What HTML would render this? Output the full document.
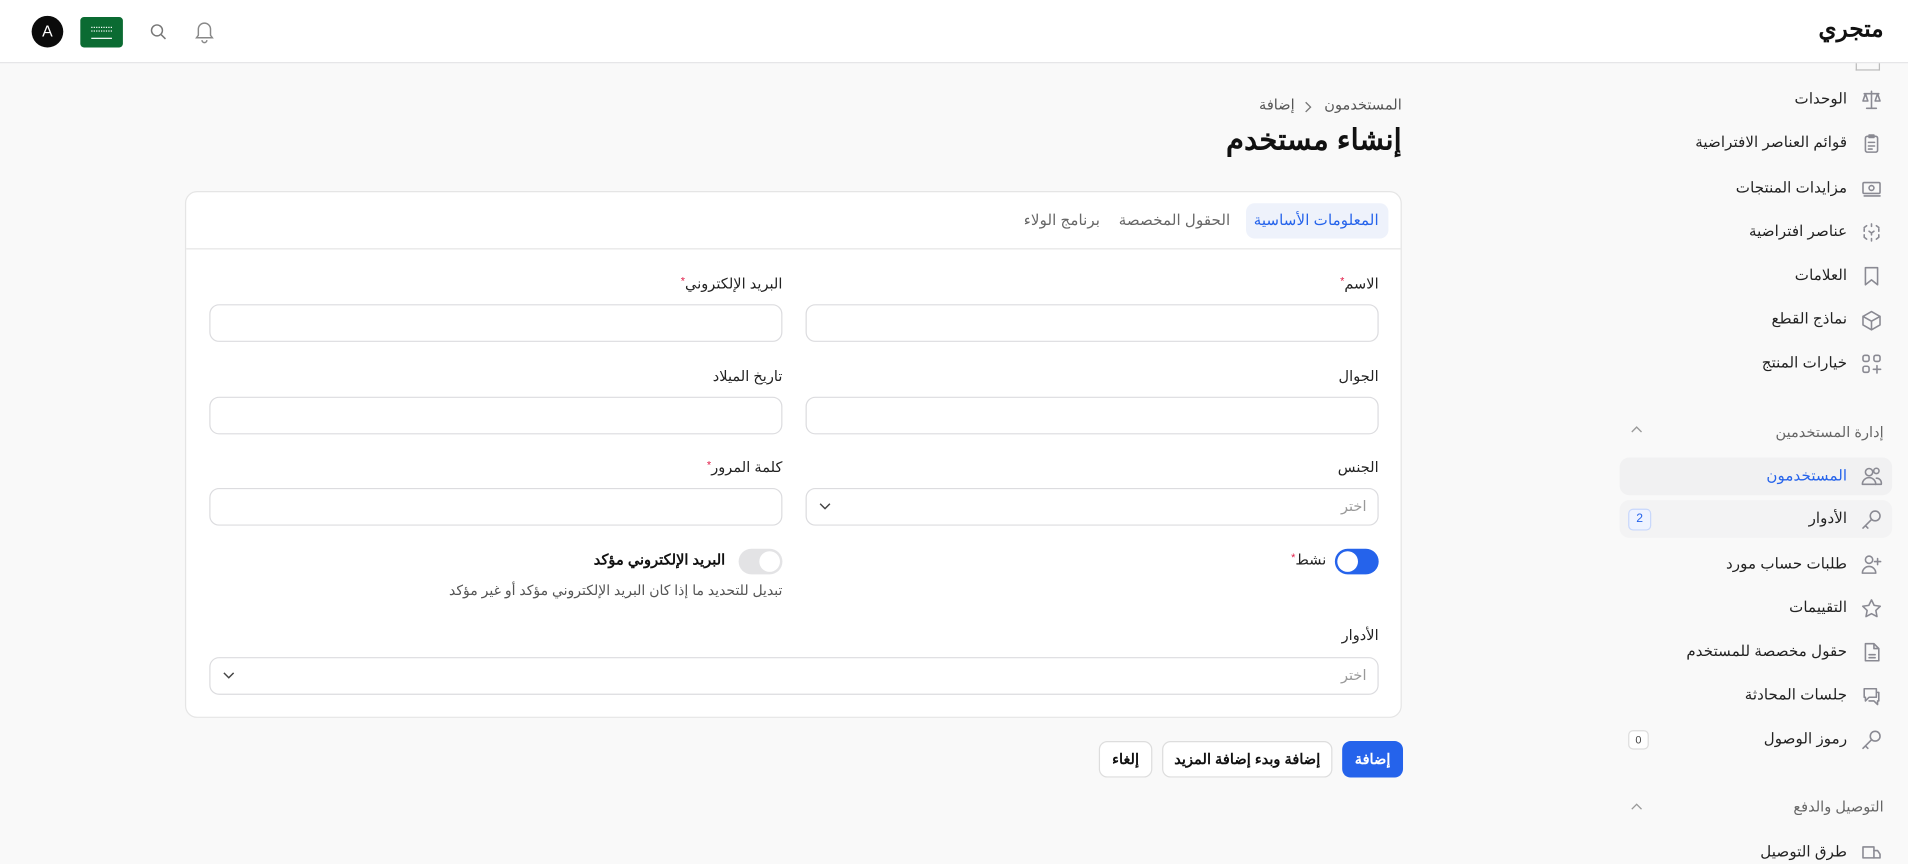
<!DOCTYPE html>
<html lang="ar" dir="rtl"><head><meta charset="utf-8">
<style>
*{box-sizing:border-box;margin:0;padding:0}
html,body{width:1908px;height:860px;overflow:hidden;background:#f9f9f9}
body{font-family:"Liberation Sans","Noto Sans CJK SC",sans-serif;color:#111}
#w{position:absolute;left:0;top:0;width:1568px;height:707px;transform:scale(1.21684);transform-origin:0 0;background:#f9f9f9;direction:ltr}
.a{position:absolute}
.t{position:absolute;direction:rtl;white-space:nowrap}
.hdr{left:0;top:0;width:1568px;height:52px;background:#fff;border-bottom:1px solid #e4e4e7}
.card{left:152px;top:157px;width:1000px;height:433px;background:#fff;border:1px solid #e5e5e5;border-radius:10px}
.inp{position:absolute;height:31px;background:#fff;border:1px solid #dcdcdf;border-radius:8px}
.lbl{font-size:12px;color:#222}
.req{color:#e11d48;font-size:9px;vertical-align:top}
.si{font-size:12.5px;color:#222}
.ic{position:absolute;width:18px;height:18px}
.ic *{fill:none;stroke:#8a8a93;stroke-width:1.3;stroke-linecap:round;stroke-linejoin:round}
.btn{position:absolute;top:609px;height:30px;border-radius:7px;font-size:12px;font-weight:bold;display:flex;align-items:center;justify-content:center;direction:rtl}
</style></head><body><div id="w">
<div class="a hdr"></div>
<div class="t" style="right:20px;top:13px;font-size:19px;font-weight:bold">متجري</div>
<div class="a" style="left:26px;top:13px;width:26px;height:26px;border-radius:50%;background:#0b0b0b;color:#fff;font-size:13px;text-align:center;line-height:26px">A</div>
<div class="a" style="left:66px;top:14px;width:35px;height:25px;border-radius:3px;background:#0b6b32"><div class="a" style="left:9px;top:8px;width:17px;height:4px;border-top:1px dotted #fff;border-bottom:1px dotted #fff"></div><div class="a" style="left:9px;top:17px;width:17px;height:1px;background:#fff"></div></div>
<svg class="a" style="left:123px;top:19px" width="14" height="14" viewBox="0 0 14 14"><circle cx="6" cy="6" r="4.5" fill="none" stroke="#777" stroke-width="1.2"/><path d="M9.5 9.5L13 13" stroke="#777" stroke-width="1.2"/></svg>
<svg class="a" style="left:159px;top:16px" width="18" height="20" viewBox="0 0 18 20"><path d="M4 13V8a5 5 0 0 1 10 0v5l1.5 2h-13z M7 17a2 2 0 0 0 4 0" fill="none" stroke="#888" stroke-width="1.2"/></svg>

<!-- sidebar -->
<div class="a" style="left:1525px;top:52px;width:20px;height:6px;border:1px solid #bbb;border-top:none"></div>
<div class="t si" style="right:50px;top:73px">الوحدات</div>
<svg class="ic" style="left:1529px;top:73px" viewBox="0 0 18 18"><path d="M9 2v14M5 16h8M3 4h12M4 4l-2 6h4zM14 4l-2 6h4z"/></svg>
<div class="t si" style="right:50px;top:109px">قوائم العناصر الافتراضية</div>
<svg class="ic" style="left:1529px;top:109px" viewBox="0 0 18 18"><rect x="4" y="3" width="10" height="13" rx="1.5"/><path d="M7 2h4v2H7zM6.5 8h5M6.5 11h5M6.5 13.5h3"/></svg>
<div class="t si" style="right:50px;top:146px">مزايدات المنتجات</div>
<svg class="ic" style="left:1529px;top:146px" viewBox="0 0 18 18"><rect x="2" y="4" width="14" height="9" rx="1"/><circle cx="9" cy="8.5" r="2"/><path d="M3 15h13"/></svg>
<div class="t si" style="right:50px;top:182px">عناصر افتراضية</div>
<svg class="ic" style="left:1529px;top:182px" viewBox="0 0 18 18"><path d="M9 2v2M9 14v2M3 6v2M15 6v2M3 11v2M15 11v2M5 3.5l-2 1.5M13 3.5l2 1.5M5 14.5l-2-1.5M13 14.5l2-1.5M7 8l2 1.5 2-1.5M9 9.5V11"/></svg>
<div class="t si" style="right:50px;top:218px">العلامات</div>
<svg class="ic" style="left:1529px;top:218px" viewBox="0 0 18 18"><path d="M4 2h10v14l-5-4-5 4z"/></svg>
<div class="t si" style="right:50px;top:254px">نماذج القطع</div>
<svg class="ic" style="left:1529px;top:254px" viewBox="0 0 18 18"><path d="M9 2l7 4v7l-7 4-7-4V6zM2 6l7 4 7-4M9 10v7"/></svg>
<div class="t si" style="right:50px;top:290px">خيارات المنتج</div>
<svg class="ic" style="left:1529px;top:290px" viewBox="0 0 18 18"><rect x="2" y="2" width="5" height="5" rx="1.5"/><rect x="11" y="2" width="5" height="5" rx="1.5"/><rect x="2" y="11" width="5" height="5" rx="1.5"/><path d="M13.5 10.5v6M10.5 13.5h6"/></svg>

<div class="t" style="right:20px;top:348px;font-size:12px;color:#666">إدارة المستخدمين</div>
<svg class="a" style="left:1340px;top:349px" width="10" height="8" viewBox="0 0 10 8"><path d="M1 6l4-4 4 4" fill="none" stroke="#999" stroke-width="1.1"/></svg>
<div class="a" style="left:1331px;top:376px;width:224px;height:31px;background:#f1f1f2;border-radius:8px"></div>
<div class="t si" style="right:50px;top:383px;color:#2563eb">المستخدمون</div>
<svg class="ic" style="left:1529px;top:382px" viewBox="0 0 18 18"><g style="stroke:#2563eb"><circle cx="7" cy="6" r="3"/><path d="M1.5 16a5.5 5.5 0 0 1 11 0z"/><circle cx="13" cy="5" r="2.2"/><path d="M12 16h5a4 4 0 0 0-4-5"/></g></svg>
<div class="a" style="left:1331px;top:411px;width:224px;height:31px;background:#f3f3f4;border-radius:8px"></div>
<div class="t si" style="right:50px;top:418px">الأدوار</div>
<svg class="ic" style="left:1529px;top:418px" viewBox="0 0 18 18"><circle cx="12" cy="6" r="4"/><path d="M9 9L2 16M4 14l2 2"/></svg>
<div class="a" style="left:1338px;top:418px;width:19px;height:18px;border:1px solid #c8d7fb;background:#eef3ff;border-radius:4px;font-size:10px;color:#2563eb;text-align:center;line-height:16px">2</div>
<div class="t si" style="right:50px;top:455px">طلبات حساب مورد</div>
<svg class="ic" style="left:1529px;top:455px" viewBox="0 0 18 18"><circle cx="7" cy="5" r="3"/><path d="M1.5 16a5.5 5.5 0 0 1 11 0zM14 4v5M11.5 6.5h5"/></svg>
<div class="t si" style="right:50px;top:491px">التقييمات</div>
<svg class="ic" style="left:1529px;top:491px" viewBox="0 0 18 18"><path d="M9 2l2.2 4.5 5 .7-3.6 3.5.9 5L9 13.3 4.5 15.7l.9-5L1.8 7.2l5-.7z"/></svg>
<div class="t si" style="right:50px;top:527px">حقول مخصصة للمستخدم</div>
<svg class="ic" style="left:1529px;top:527px" viewBox="0 0 18 18"><path d="M4 2h7l4 4v10H4zM11 2v4h4M7 11h5M7 13.5h5"/></svg>
<div class="t si" style="right:50px;top:563px">جلسات المحادثة</div>
<svg class="ic" style="left:1529px;top:563px" viewBox="0 0 18 18"><path d="M3 3h10v7H7l-3 3v-3H3zM13 6h2v7h-1v3l-3-3H7"/></svg>
<div class="t si" style="right:50px;top:599px">رموز الوصول</div>
<svg class="ic" style="left:1529px;top:599px" viewBox="0 0 18 18"><circle cx="12" cy="6" r="4"/><path d="M9 9L2 16M4 14l2 2"/></svg>
<div class="a" style="left:1338px;top:600px;width:17px;height:16px;border:1px solid #ddd;background:#fff;border-radius:4px;font-size:9px;color:#444;text-align:center;line-height:14px">0</div>
<div class="t" style="right:20px;top:656px;font-size:12px;color:#666">التوصيل والدفع</div>
<svg class="a" style="left:1340px;top:659px" width="10" height="8" viewBox="0 0 10 8"><path d="M1 6l4-4 4 4" fill="none" stroke="#999" stroke-width="1.1"/></svg>
<div class="t si" style="right:50px;top:692px">طرق التوصيل</div>
<svg class="ic" style="left:1529px;top:692px" viewBox="0 0 18 18"><rect x="2" y="4" width="9" height="9"/><path d="M11 7h3l2 3v3h-5"/></svg>

<!-- main -->
<div class="t" style="right:416px;top:79px;font-size:12px;color:#555">المستخدمون</div>
<svg class="a" style="left:1071px;top:83px" width="8" height="10" viewBox="0 0 8 10"><path d="M2 1l4 4-4 4" fill="none" stroke="#777" stroke-width="1.1"/></svg>
<div class="t" style="right:504px;top:79px;font-size:12px;color:#555">إضافة</div>
<div class="t" style="right:416px;top:101px;font-size:24px;font-weight:bold">إنشاء مستخدم</div>

<div class="a card"></div>
<div class="a" style="left:153px;top:204px;width:998px;height:1px;background:#e5e5e5"></div>
<div class="a" style="left:1024px;top:167px;width:117px;height:29px;background:#eef2fb;border-radius:7px"></div>
<div class="t" style="right:435px;top:173px;font-size:12.5px;color:#2563eb">المعلومات الأساسية</div>
<div class="t" style="right:557px;top:173px;font-size:12.5px;color:#666">الحقول المخصصة</div>
<div class="t" style="right:664px;top:173px;font-size:12.5px;color:#666">برنامج الولاء</div>

<div class="t lbl" style="right:435px;top:226px">الاسم<span class="req">*</span></div>
<div class="inp" style="left:662px;top:250px;width:471px"></div>
<div class="t lbl" style="right:925px;top:226px">البريد الإلكتروني<span class="req">*</span></div>
<div class="inp" style="left:172px;top:250px;width:471px"></div>
<div class="t lbl" style="right:435px;top:302px">الجوال</div>
<div class="inp" style="left:662px;top:326px;width:471px"></div>
<div class="t lbl" style="right:925px;top:302px">تاريخ الميلاد</div>
<div class="inp" style="left:172px;top:326px;width:471px"></div>
<div class="t lbl" style="right:435px;top:377px">الجنس</div>
<div class="inp" style="left:662px;top:401px;width:471px"></div>
<div class="t" style="right:445px;top:409px;font-size:12px;color:#999">اختر</div>
<svg class="a" style="left:673px;top:412px" width="10" height="8" viewBox="0 0 10 8"><path d="M1 2l4 4 4-4" fill="none" stroke="#444" stroke-width="1.2"/></svg>
<div class="t lbl" style="right:925px;top:377px">كلمة المرور<span class="req">*</span></div>
<div class="inp" style="left:172px;top:401px;width:471px"></div>

<div class="a" style="left:1097px;top:451px;width:36px;height:21px;border-radius:11px;background:#2563eb"><div class="a" style="left:2px;top:2px;width:17px;height:17px;border-radius:50%;background:#fff"></div></div>
<div class="t lbl" style="right:478px;top:453px">نشط<span class="req">*</span></div>
<div class="a" style="left:607px;top:451px;width:36px;height:21px;border-radius:11px;background:#e3e3e5"><div class="a" style="left:17px;top:2px;width:17px;height:17px;border-radius:50%;background:#fff"></div></div>
<div class="t" style="right:972px;top:453px;font-size:12px;font-weight:600">البريد الإلكتروني مؤكد</div>
<div class="t" style="right:925px;top:478px;font-size:11.5px;color:#555">تبديل للتحديد ما إذا كان البريد الإلكتروني مؤكد أو غير مؤكد</div>

<div class="t lbl" style="right:435px;top:515px">الأدوار</div>
<div class="inp" style="left:172px;top:540px;width:961px"></div>
<div class="t" style="right:445px;top:548px;font-size:12px;color:#999">اختر</div>
<svg class="a" style="left:183px;top:551px" width="10" height="8" viewBox="0 0 10 8"><path d="M1 2l4 4 4-4" fill="none" stroke="#444" stroke-width="1.2"/></svg>

<div class="btn" style="left:1103px;width:50px;background:#2563eb;color:#fff">إضافة</div>
<div class="btn" style="left:955px;width:140px;background:#fff;border:1px solid #ddd">إضافة وبدء إضافة المزيد</div>
<div class="btn" style="left:903px;width:44px;background:#fff;border:1px solid #ddd">إلغاء</div>
</div></body></html>
